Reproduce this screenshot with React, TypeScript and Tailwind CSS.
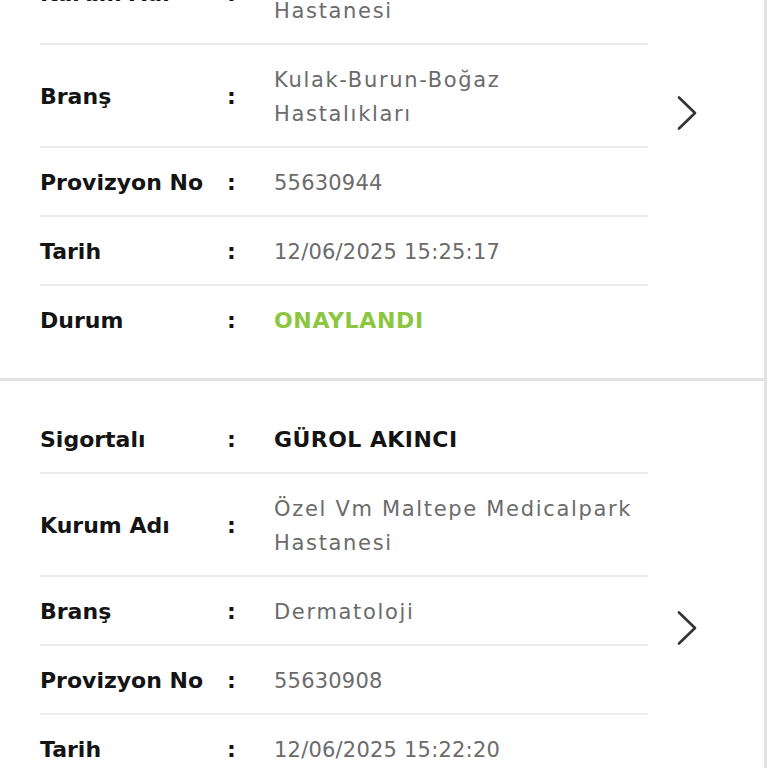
type Row = {
  label: string
  value: string[]
  tone?: 'default' | 'strong' | 'success'
}

type Provision = {
  id: string
  rows: Row[]
}

const provisions: Provision[] = [
  {
    id: '55630944',
    rows: [
      { label: 'Sigortalı', value: ['GÜROL AKINCI'], tone: 'strong' },
      { label: 'Kurum Adı', value: ['Özel Vm Maltepe Medicalpark', 'Hastanesi'] },
      { label: 'Branş', value: ['Kulak-Burun-Boğaz', 'Hastalıkları'] },
      { label: 'Provizyon No', value: ['55630944'] },
      { label: 'Tarih', value: ['12/06/2025 15:25:17'] },
      { label: 'Durum', value: ['ONAYLANDI'], tone: 'success' },
    ],
  },
  {
    id: '55630908',
    rows: [
      { label: 'Sigortalı', value: ['GÜROL AKINCI'], tone: 'strong' },
      { label: 'Kurum Adı', value: ['Özel Vm Maltepe Medicalpark', 'Hastanesi'] },
      { label: 'Branş', value: ['Dermatoloji'] },
      { label: 'Provizyon No', value: ['55630908'] },
      { label: 'Tarih', value: ['12/06/2025 15:22:20'] },
      { label: 'Durum', value: ['ONAYLANDI'], tone: 'success' },
    ],
  },
]

function ChevronRight() {
  return (
    <svg width="22" height="34" viewBox="0 0 22 34" fill="none" aria-hidden>
      <polyline
        points="3,1.5 19,17 3,32.5"
        stroke="#333333"
        strokeWidth="2.6"
        strokeLinecap="round"
        strokeLinejoin="round"
      />
    </svg>
  )
}

function InfoRow({ row, last }: { row: Row; last: boolean }) {
  const numeric = /^[\d/: ]+$/.test(row.value.join(''))

  const valueClass =
    row.tone === 'strong'
      ? 'font-bold text-[#141414] tracking-[0.02em] text-[22px]'
      : row.tone === 'success'
        ? 'font-bold text-[#8cc63f] tracking-[0.03em] text-[22px]'
        : numeric
          ? 'text-[#6b6b6b] tracking-[0.01em] text-[21px]'
          : 'text-[#6b6b6b] tracking-[0.08em] text-[21px]'

  return (
    <div
      className={`flex items-center pt-[18px] pb-[15px] ${last ? '' : 'border-b-2 border-[#ececec]'}`}
    >
      <div className="w-[187px] shrink-0 text-[22px] leading-[34px] font-bold text-[#141414]">
        {row.label}
      </div>
      <div className="w-[47px] shrink-0 text-[22px] leading-[34px] font-bold text-[#141414]">:</div>
      <div className={`flex-1 leading-[34px] ${valueClass}`}>
        {row.value.map((line) => (
          <div key={line}>{line}</div>
        ))}
      </div>
    </div>
  )
}

function ProvisionCard({ provision }: { provision: Provision }) {
  return (
    <div className="mr-px flex border-r-[3px] border-b-[3px] border-[#e2e2e2] bg-white pt-6 pb-[25px] pl-10">
      <div className="w-[608px] shrink-0">
        {provision.rows.map((row, i) => (
          <InfoRow key={row.label} row={row} last={i === provision.rows.length - 1} />
        ))}
      </div>
      <div className="flex flex-1 items-center pl-[28px]">
        <ChevronRight />
      </div>
    </div>
  )
}

export default function App() {
  return (
    <div
      className="h-[768px] w-[768px] overflow-hidden bg-white"
      style={{ fontFamily: '"DejaVu Sans", "Noto Sans", sans-serif' }}
    >
      <div className="-mt-[151px]">
        {provisions.map((p) => (
          <ProvisionCard key={p.id} provision={p} />
        ))}
      </div>
    </div>
  )
}
